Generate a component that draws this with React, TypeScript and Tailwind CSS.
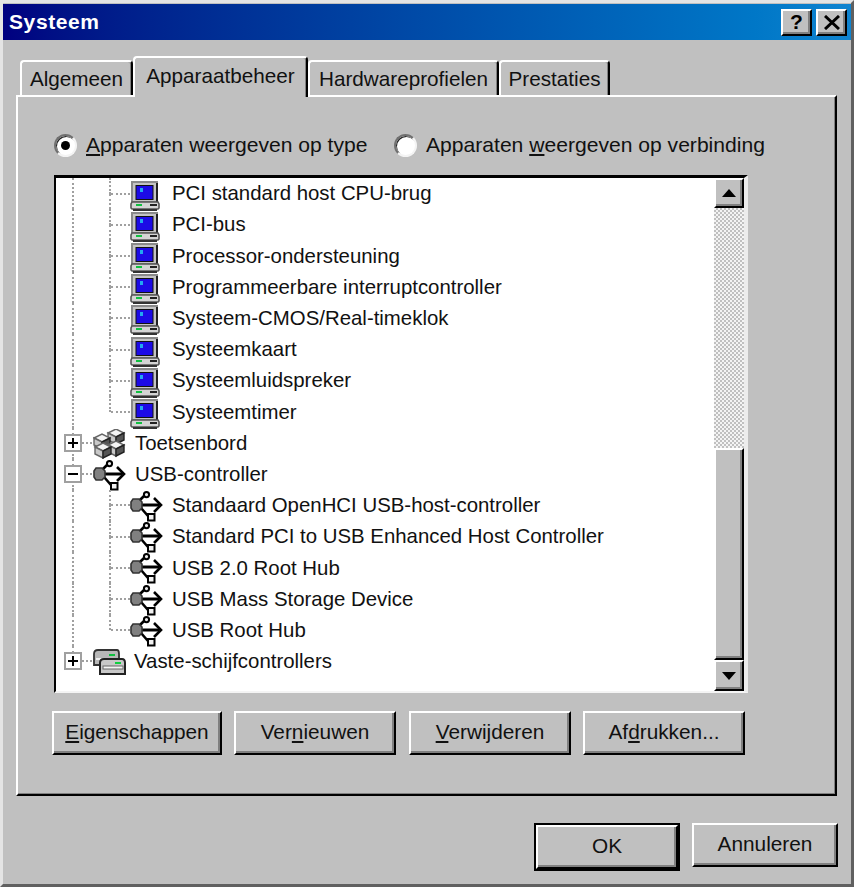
import React from "react";

const raised = "bg-[#c0c0c0] border-2 border-t-white border-l-white border-r-black border-b-black shadow-[inset_-2px_-2px_0_#808080]";

function Computer() {
  return (
    <svg width="30" height="30" viewBox="0 0 30 30" className="mt-[4px] shrink-0">
      <rect x="2" y="1" width="25" height="20" fill="#c4c4c4" stroke="#8a8a8a" strokeWidth="2" />
      <rect x="26" y="2" width="2" height="19" fill="#222" />
      <rect x="6" y="4.5" width="17" height="14" fill="#1c0ae6" stroke="#111" strokeWidth="1" />
      <rect x="10" y="7" width="3" height="4" fill="#22a8f0" />
      <path d="M2 21H28L29 23V27L28 28H2L1 27V23Z" fill="#d4d4d4" stroke="#555" strokeWidth="1.6" />
      <rect x="3" y="28" width="24" height="2" fill="#333" />
      <rect x="6" y="23" width="6" height="2" fill="#10c040" />
      <rect x="20" y="23" width="7" height="2" fill="#222" />
    </svg>
  );
}

function Usb() {
  return (
    <svg width="33" height="31" viewBox="0 0 33 31" className="mt-[2px] shrink-0">
      <path d="M10 14H29" stroke="#000" strokeWidth="3" />
      <path d="M24 7L31 14L24 21" fill="none" stroke="#000" strokeWidth="2.6" />
      <path d="M9 10L14 5" fill="none" stroke="#000" strokeWidth="2.6" />
      <circle cx="16.5" cy="3.6" r="2.6" fill="#e8e8e8" stroke="#000" strokeWidth="2" />
      <path d="M11 17L18 25" fill="none" stroke="#000" strokeWidth="2.6" />
      <rect x="18" y="23" width="6.5" height="6.5" fill="#f0f0f0" stroke="#000" strokeWidth="2" />
      <path d="M3 8H9L12 11V17L9 20H3L1 17V11Z" fill="#808080" stroke="#333" strokeWidth="1.6" />
    </svg>
  );
}

function Keyboard() {
  const c = (x: number, y: number, k: number) => (
    <g key={k}>
      <path d={`M${x} ${y + 4}l8-4 8 4-8 4z`} fill="#f4f4f4" stroke="#666" strokeWidth="1.4" />
      <path d={`M${x} ${y + 4}v7l8 4v-7z`} fill="#c8c8c8" stroke="#666" strokeWidth="1.4" />
      <path d={`M${x + 16} ${y + 4}v7l-8 4v-7z`} fill="#555" stroke="#222" strokeWidth="1.4" />
    </g>
  );
  return (
    <svg width="33" height="30" viewBox="0 0 33 30" className="mt-px shrink-0">
      {c(15, 0, 0)}
      {c(1, 5, 1)}
      {c(15, 12, 2)}
      {c(2, 14, 3)}
    </svg>
  );
}

function Disks() {
  return (
    <svg width="33" height="26" viewBox="0 0 33 26" className="mt-[2px] shrink-0">
      <path d="M1 5Q1 1 5 1H24Q26 1 26 5V16H1Z" fill="#b8b8b8" stroke="#333" strokeWidth="1.8" />
      <rect x="16" y="5" width="6" height="2" fill="#10c040" />
      <rect x="3" y="9" width="16" height="2" fill="#f0f0f0" />
      <path d="M7 14Q7 10 11 10H29Q32 10 32 14V25H7Z" fill="#c8c8c8" stroke="#222" strokeWidth="2" />
      <rect x="22" y="13" width="6" height="2" fill="#10d040" />
      <rect x="10" y="17" width="20" height="3" fill="#f5f5f5" stroke="#666" strokeWidth="1" />
    </svg>
  );
}

const V = "border-l-2 border-dotted border-[#a0a0a0]";
const H = "border-t-2 border-dotted border-[#a0a0a0]";

function Child({ icon, label, last }: { icon: React.ReactNode; label: string; last?: boolean }) {
  return (
    <div className="flex h-[31.2px] items-center">
      <div className={`h-full w-[37px] shrink-0 ${V}`} />
      <div className="flex h-full w-[21px] shrink-0 flex-col">
        <div className={`h-1/2 ${V}`} />
        <div className={`h-1/2 ${last ? "" : V}`} />
      </div>
      <div className={`-ml-[19px] w-[19px] shrink-0 ${H}`} />
      <div className="flex w-[42px] shrink-0 justify-start">{icon}</div>
      <span>{label}</span>
    </div>
  );
}

function Branch({ sign, icon, label, last, textX }: { sign: "+" | "-"; icon: React.ReactNode; label: string; last?: boolean; textX: string }) {
  return (
    <div className="flex h-[31.2px] items-center">
      <div className="relative flex h-full w-[21px] shrink-0 items-center">
        <div className="flex h-full flex-col">
          <div className={`h-1/2 ${V}`} />
          <div className={`h-1/2 ${last ? "" : V}`} />
        </div>
        <div className="absolute -left-[8px] flex h-[18px] w-[18px] items-center justify-center border-2 border-[#a0a0a0] bg-white">
          <div className="relative h-[10px] w-[10px]">
            <div className="absolute left-0 top-[4px] h-[2px] w-[10px] bg-black" />
            {sign === "+" && <div className="absolute left-[4px] top-0 h-[10px] w-[2px] bg-black" />}
          </div>
        </div>
        <div className={`absolute left-[10px] w-[10px] ${H}`} />
      </div>
      <div className={`flex shrink-0 ${textX}`}>{icon}</div>
      <span>{label}</span>
    </div>
  );
}

function Btn({ children, w }: { children: React.ReactNode; w: string }) {
  return <div className={`flex h-[44px] items-center justify-center pb-[2px] text-[20.8px] ${w} ${raised}`}>{children}</div>;
}

function Radio({ checked }: { checked?: boolean }) {
  return (
    <div className="flex h-[23px] w-[23px] shrink-0 items-center justify-center rounded-full border-2 border-t-[#707070] border-l-[#707070] border-r-[#f4f4f4] border-b-[#f4f4f4] bg-white shadow-[inset_1px_1px_0_#222]">
      {checked && <div className="h-[9px] w-[9px] rounded-full bg-black" />}
    </div>
  );
}

function Arrow({ up }: { up?: boolean }) {
  return (
    <svg width="14" height="8" viewBox="0 0 14 8">
      <path d={up ? "M7 0L14 8H0Z" : "M0 0H14L7 8Z"} fill="#000" />
    </svg>
  );
}

function Tab({ children, active, w }: { children: React.ReactNode; active?: boolean; w: string }) {
  return (
    <div
      className={`relative flex items-center justify-center rounded-t-[4px] border-t-2 border-l-2 border-r-2 border-t-white border-l-white border-r-black bg-[#c0c0c0] text-[20.7px] shadow-[inset_-1px_0_0_#808080] ${w} ${
        active ? "z-10 -mb-[2px] h-[41px] pb-[4px]" : "h-[35px]"
      }`}
    >
      {children}
    </div>
  );
}

export default function App() {
  const system = [
    "PCI standard host CPU-brug",
    "PCI-bus",
    "Processor-ondersteuning",
    "Programmeerbare interruptcontroller",
    "Systeem-CMOS/Real-timeklok",
    "Systeemkaart",
    "Systeemluidspreker",
  ];
  const usb = [
    "Standaard OpenHCI USB-host-controller",
    "Standard PCI to USB Enhanced Host Controller",
    "USB 2.0 Root Hub",
    "USB Mass Storage Device",
  ];
  return (
    <div className="flex h-[887px] w-[854px] flex-col overflow-hidden border-[3px] border-t-[#e4e4e4] border-l-[#e4e4e4] border-r-[#606060] border-b-[#606060] bg-[#c0c0c0] font-['Liberation_Sans',sans-serif] text-[21px] text-[#111]">
      <div className="mt-px flex h-[36px] shrink-0 items-center justify-between bg-gradient-to-r from-[#000080] to-[#1084d0] pl-[6px] pr-[4px]">
        <span className="text-[21px] font-bold tracking-[0.6px] text-white">Systeem</span>
        <div className="flex gap-[4px]">
          <div className={`flex h-[27px] w-[31px] items-center justify-center text-[21px] font-bold text-black ${raised}`}>?</div>
          <div className={`flex h-[27px] w-[31px] items-center justify-center ${raised}`}>
            <svg width="16" height="15" viewBox="0 0 16 15">
              <path d="M1 1L15 14M15 1L1 14" stroke="#000" strokeWidth="3" />
            </svg>
          </div>
        </div>
      </div>

      <div className="ml-[17px] mt-[17px] flex h-[38px] shrink-0 items-end">
        <Tab w="w-[113px]">Algemeen</Tab>
        <Tab w="w-[175px]" active>
          Apparaatbeheer
        </Tab>
        <Tab w="w-[191px]">Hardwareprofielen</Tab>
        <Tab w="w-[111px]">Prestaties</Tab>
      </div>

      <div className="ml-[13px] flex h-[701px] w-[821px] shrink-0 flex-col border-2 border-t-white border-l-white border-r-black border-b-black pl-[36px] shadow-[inset_-1px_-1px_0_#808080]">
        <div className="mt-[36px] flex h-[24px] items-center text-[21.1px]">
          <Radio checked />
          <span className="ml-[9px] w-[308px] whitespace-nowrap">
            <u>A</u>pparaten weergeven op type
          </span>
          <Radio />
          <span className="ml-[9px] whitespace-nowrap">
            Apparaten <u>w</u>eergeven op verbinding
          </span>
        </div>

        <div className="mt-[18px] flex h-[518px] w-[694px] border-t-[3px] border-l-2 border-r-4 border-b-2 border-t-black border-l-black border-r-[#ececec] border-b-[#f4f4f4] bg-white text-[20.4px]">
          <div className="min-w-0 flex-1 overflow-hidden pl-[16px]">
            {system.map((s) => (
              <Child key={s} icon={<Computer />} label={s} />
            ))}
            <Child icon={<Computer />} label="Systeemtimer" last />
            <Branch sign="+" icon={<Keyboard />} label="Toetsenbord" textX="w-[42px]" />
            <Branch sign="-" icon={<Usb />} label="USB-controller" textX="w-[42px]" />
            {usb.map((s) => (
              <Child key={s} icon={<Usb />} label={s} />
            ))}
            <Child icon={<Usb />} label="USB Root Hub" last />
            <Branch sign="+" icon={<Disks />} label="Vaste-schijfcontrollers" textX="w-[41px]" last />
          </div>
          <div className="flex w-[30px] shrink-0 flex-col">
            <div className={`flex h-[30px] items-center justify-center ${raised}`}>
              <Arrow up />
            </div>
            <div className="h-[240px] bg-[repeating-conic-gradient(#c0c0c0_0_25%,#f4f4f4_0_50%)] bg-[length:4px_4px]" />
            <div className={`h-[212px] ${raised}`} />
            <div className={`flex h-[31px] items-center justify-center ${raised}`}>
              <Arrow />
            </div>
          </div>
        </div>

        <div className="-ml-[2px] mt-[18px] flex">
          <Btn w="w-[170px]">
            <span>
              <u>E</u>igenschappen
            </span>
          </Btn>
          <div className="ml-[12px]">
            <Btn w="w-[162px]">
              <span>
                Ver<u>n</u>ieuwen
              </span>
            </Btn>
          </div>
          <div className="ml-[13px]">
            <Btn w="w-[162px]">
              <span>
                <u>V</u>erwijderen
              </span>
            </Btn>
          </div>
          <div className="ml-[12px]">
            <Btn w="w-[162px]">
              <span>
                Af<u>d</u>rukken...
              </span>
            </Btn>
          </div>
        </div>
      </div>

      <div className="mt-[27px] flex justify-end gap-[12px] pr-[13px]">
        <div className="border-2 border-black">
          <Btn w="w-[142px]">OK</Btn>
        </div>
        <Btn w="w-[146px]">Annuleren</Btn>
      </div>
    </div>
  );
}
